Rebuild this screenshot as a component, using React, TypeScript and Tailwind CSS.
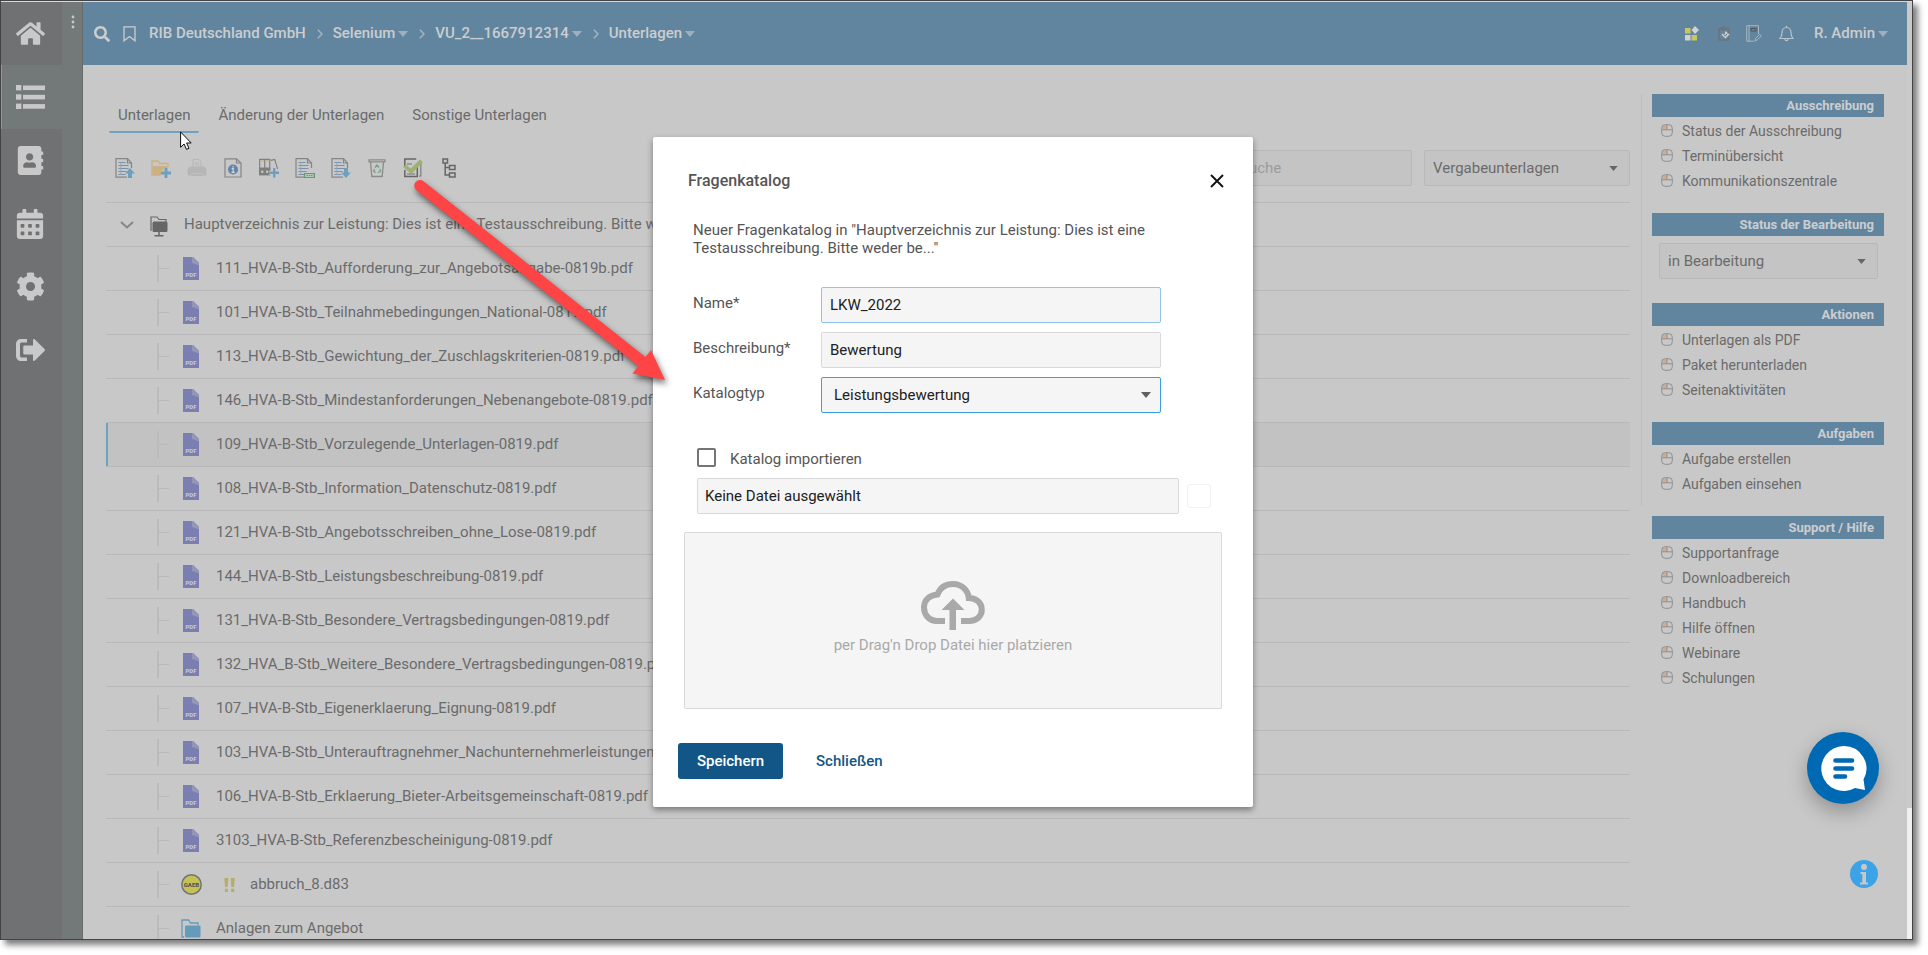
import React from "react";
import { FaHome, FaAddressBook, FaCalendarAlt, FaCog, FaSearch } from "react-icons/fa";

const files = [
  "111_HVA-B-Stb_Aufforderung_zur_Angebotsabgabe-0819b.pdf",
  "101_HVA-B-Stb_Teilnahmebedingungen_National-0819.pdf",
  "113_HVA-B-Stb_Gewichtung_der_Zuschlagskriterien-0819.pdf",
  "146_HVA-B-Stb_Mindestanforderungen_Nebenangebote-0819.pdf",
  "109_HVA-B-Stb_Vorzulegende_Unterlagen-0819.pdf",
  "108_HVA-B-Stb_Information_Datenschutz-0819.pdf",
  "121_HVA-B-Stb_Angebotsschreiben_ohne_Lose-0819.pdf",
  "144_HVA-B-Stb_Leistungsbeschreibung-0819.pdf",
  "131_HVA-B-Stb_Besondere_Vertragsbedingungen-0819.pdf",
  "132_HVA_B-Stb_Weitere_Besondere_Vertragsbedingungen-0819.pdf",
  "107_HVA-B-Stb_Eigenerklaerung_Eignung-0819.pdf",
  "103_HVA-B-Stb_Unterauftragnehmer_Nachunternehmerleistungen-0819.pdf",
  "106_HVA-B-Stb_Erklaerung_Bieter-Arbeitsgemeinschaft-0819.pdf",
  "3103_HVA-B-Stb_Referenzbescheinigung-0819.pdf",
];
const selectedFile = 4;

function Caret({ className }: { className: string }) {
  return (
    <svg aria-hidden="true" viewBox="0 0 10 6" className={className}>
      <path d="M0 0h10L5 6z" fill="currentColor" />
    </svg>
  );
}

function ListIcon() {
  return (
    <svg aria-hidden="true" viewBox="0 0 29 24" className="h-6 w-[29px]" fill="currentColor">
      {[0, 9.3, 18.6].map((y) => (
        <g key={y}>
          <rect x="0" y={y} width="5.4" height="5.4" />
          <rect x="7" y={y + 0.5} width="22" height="4.6" />
        </g>
      ))}
    </svg>
  );
}

function LogoutIcon() {
  return (
    <svg aria-hidden="true" viewBox="0 0 29 22" className="h-[22px] w-[29px]" fill="currentColor">
      <path d="M11 0H5.5C2 0 0 2 0 5.5v11C0 20 2 22 5.500 22H11v-3.600H6c-1.400 0-2-.6-2-2V5.600c0-1.400.6-2 2-2h5z" />
      <path d="M8.500 6.500H17V1.200C17 0 18.100-.3 18.900.5l9.600 9.500c.6.600.6 1.400 0 2l-9.600 9.500c-.8.800-1.900.4-1.900-.8V15.500H8.500c-.8 0-1.200-.4-1.200-1.200V7.700c0-.8.4-1.200 1.200-1.200z" />
    </svg>
  );
}

function Sidebar() {
  const item = "flex h-[63px] w-[61px] shrink-0 items-center justify-center pr-[3px]";
  return (
    <aside className="flex w-[82px] shrink-0 border-r border-[#666b6c] bg-[#737878] text-[#c9c9c9]">
      <nav aria-label="Hauptnavigation" className="flex w-[61px] flex-col bg-[#707173]">
        <a href="#start" aria-label="Startseite" className={item}><FaHome size={29} /></a>
        <a href="#listen" aria-label="Listen" className="flex h-16 w-[61px] shrink-0 items-center justify-center border-l border-[#6ca3c4] bg-[#737878] pr-[3px]"><ListIcon /></a>
        <a href="#kontakte" aria-label="Kontakte" className={item}><FaAddressBook size={29} /></a>
        <a href="#kalender" aria-label="Kalender" className={item}><FaCalendarAlt size={30} /></a>
        <a href="#einstellungen" aria-label="Einstellungen" className={item}><FaCog size={29} /></a>
        <a href="#abmelden" aria-label="Abmelden" className={item}><LogoutIcon /></a>
      </nav>
      <button type="button" aria-label="Menü" className="flex h-10 w-5 items-center justify-center pl-0.5">
        <svg aria-hidden="true" viewBox="0 0 4 14" className="h-3.5 w-1" fill="currentColor">
          <circle cx="2" cy="2" r="1.400" /><circle cx="2" cy="7" r="1.400" /><circle cx="2" cy="12" r="1.400" />
        </svg>
      </button>
    </aside>
  );
}

function Crumb({ label, caret = true, first = false }: { label: string; caret?: boolean; first?: boolean }) {
  return (
    <li className="flex items-center">
      {!first && (
        <svg aria-hidden="true" viewBox="0 0 6 10" className="mr-2.5 h-2.5 w-1.5 text-[#a3b3bf]" fill="none" stroke="currentColor" strokeWidth="1.500">
          <path d="M.8.800 5 5 .8 9.200" />
        </svg>
      )}
      <a href="#pfad" className="flex items-center">
        {label}
        {caret && <Caret className="ml-[3px] h-1.5 w-2.5 text-[#9cb0bf]" />}
      </a>
    </li>
  );
}

function Header() {
  return (
    <header className="flex h-[63px] shrink-0 items-center bg-[#62859f] pl-[11px] pr-[19px] text-[15px] font-medium text-[#cbcdcf]">
      <button type="button" aria-label="Suchen"><FaSearch size={16} /></button>
      <button type="button" aria-label="Lesezeichen" className="ml-[13px]">
        <svg aria-hidden="true" viewBox="0 0 13 16" className="h-4 w-[13px]" fill="none" stroke="currentColor" strokeWidth="1.300">
          <path d="M1 .8h11v14L6.500 10.500 1 14.800z" />
        </svg>
      </button>
      <ol className="ml-[13px] flex items-center gap-[11px]">
        <Crumb label="RIB Deutschland GmbH" caret={false} first />
        <Crumb label="Selenium" />
        <Crumb label="VU_2__1667912314" />
        <Crumb label="Unterlagen" />
      </ol>
      <div className="ml-auto flex items-center">
        <button type="button" aria-label="Apps">
          <svg aria-hidden="true" viewBox="0 0 14 15" className="h-[15px] w-3.5">
            <rect x="0" y="2" width="5.500" height="5.500" fill="#c6c85c" />
            <path d="M10 0 14 4l-4 4-3.500-4z" fill="#d0d2d4" />
            <rect x="0" y="9" width="5.500" height="5.500" fill="#d0d2d4" />
            <rect x="6.500" y="9" width="5.500" height="5.500" fill="#c6c85c" />
          </svg>
        </button>
        <button type="button" aria-label="Aufgaben" className="ml-[19px]">
          <svg aria-hidden="true" viewBox="0 0 12 15" className="h-[15px] w-3">
            <path d="M1 2.500h3C4 .5 7.500.5 7.500 2.500h3V14H1z" fill="#62859f" stroke="#6b747c" strokeWidth="1.600" />
            <path d="M3 3.500h5.500" stroke="#6b747c" strokeWidth="2" />
            <path d="m7.500 5 4 3.500-4 4-1.500-1.500-2.500-2 1-1.500 2 1z" fill="#ccd0d3" />
            <path d="m5.500 8.500 2 1.500 1.800-2.500" stroke="#6b747c" strokeWidth="1" fill="none" />
          </svg>
        </button>
        <button type="button" aria-label="Notizen" className="ml-4">
          <svg aria-hidden="true" viewBox="0 0 16 17" className="h-[17px] w-4" fill="none" stroke="#a6b6c2">
            <path d="M12.500 9V.7H.7v15.500H8M3 .7v15.500" />
            <rect x="5" y="3.500" width="5" height="2.500" stroke="#4e575e" />
            <path d="m9 16 .7-2.700 4-4 1.600 1.600-4 4z" />
          </svg>
        </button>
        <button type="button" aria-label="Benachrichtigungen" className="ml-[17px]">
          <svg aria-hidden="true" viewBox="0 0 15 17" className="h-[17px] w-[15px]" fill="none" stroke="#b9c3ca" strokeWidth="1.200">
            <path d="M1 13.500c2-2 2-3 2-6C3 4.500 5 2.500 7.500 2.500s4.500 2 4.500 5c0 3 0 4 2 6zM7.500 2.500V.8M6 14c0 2.300 3 2.300 3 0" />
          </svg>
        </button>
        <button type="button" className="ml-5 flex items-center">
          R. Admin<Caret className="ml-[3px] h-1.5 w-2.5 text-[#9cb0bf]" />
        </button>
      </div>
    </header>
  );
}

function Sheet({ children }: { children?: React.ReactNode }) {
  return (
    <svg aria-hidden="true" viewBox="0 0 20 20" className="h-5 w-5" fill="none" stroke="#858585" strokeWidth="1.200">
      <path d="M16.500 10V5L12.500.6H1v18.600h11M12.500.6V5h4" />
      <path d="M3.500 4.500h7M3.500 7.500h10M3.500 10.500h10M3.500 13.500h8M3.500 16.500h7" stroke="#7693b0" />
      <path d="M5.800 4v13" stroke="#8fa3b6" strokeWidth=".8" />
      {children}
    </svg>
  );
}

function Toolbar() {
  const tools: [string, React.ReactNode][] = [
    ["Datei hochladen", <Sheet><path d="m15 10 4.800 5.500H17V20h-4v-4.500h-2.800z" fill="#6ba0bf" stroke="none" /></Sheet>],
    ["Neuer Ordner", (
      <svg aria-hidden="true" viewBox="0 0 20 20" className="h-5 w-5" fill="none" stroke="#cbb180" strokeWidth="1.300">
        <path d="M10 17H1V3h6l2 2.500h8V9" />
        <path d="M1.500 17V8h15v9z" fill="#cbb180" stroke="none" />
        <path d="M15 10v10M10 15h10" stroke="#c8c8c8" strokeWidth="5" />
        <path d="M15 10v10M10 15h10" stroke="#6ba0bf" strokeWidth="2.800" />
      </svg>
    )],
    ["Drucken", (
      <svg aria-hidden="true" viewBox="0 0 20 20" className="h-5 w-5" fill="none" stroke="#b6b6b6">
        <path d="M6 9V1.500h6L14 4v5M8 5h4M8 7h4" />
        <path d="M3 9h14l2 2v6h-2.500v-2h-13v2H1v-6z" fill="#b6b6b6" />
        <path d="M4 17h12" strokeWidth="2" />
      </svg>
    )],
    ["Information", (
      <svg aria-hidden="true" viewBox="0 0 20 20" className="h-5 w-5" fill="none" stroke="#858585" strokeWidth="1.200">
        <path d="M2 .8h11.500L18 5v14H2zM13.500.8V5H18" />
        <circle cx="10" cy="11.500" r="5" fill="#6484ab" stroke="none" />
        <path d="M8.700 10.700h1.500v3.500M8.500 14.400h3.200M9.400 8.800h1.400" stroke="#d6dae0" />
      </svg>
    )],
    ["Ordner hinzufügen", (
      <svg aria-hidden="true" viewBox="0 0 21 20" className="h-5 w-[21px]" fill="none" stroke="#7f7f7f" strokeWidth="1.200">
        <path d="M.7 1h5.300v16H.7zM6 1h5.300v16H6zM12.500 2l4-1 3 10" />
        <path d="M2 2.500h3M7.500 2.500h3" stroke="#cbb180" />
        <path d="M.7 10h10.600v7H.7z" fill="#7f7f7f" />
        <circle cx="3.400" cy="14" r="1.300" fill="#c8c8c8" stroke="none" /><circle cx="8.600" cy="14" r="1.300" fill="#c8c8c8" stroke="none" />
        <path d="M16 10v10M11 15h10" stroke="#c8c8c8" strokeWidth="4.500" />
        <path d="M16 10v10M11 15h10" stroke="#6ba0bf" strokeWidth="2.500" />
      </svg>
    )],
    ["Excel-Export", <Sheet><path d="M9.500 15.500h9.900v4H9.500z" fill="#b5c8ba" stroke="#5f9e74" /><path d="M11.500 17.500h6" stroke="#5f9e74" strokeWidth="1.200" strokeDasharray="1.500 .8" /></Sheet>],
    ["Datei herunterladen", <Sheet><path d="m15 20 4.800-5.500H17V10h-4v4.500h-2.800z" fill="#6ba0bf" stroke="none" /></Sheet>],
    ["Papierkorb", (
      <svg aria-hidden="true" viewBox="0 0 20 20" className="h-5 w-5" fill="none" stroke="#8b8b8b" strokeWidth="1.300">
        <path d="M2 1.800h16v2H2zM3.500 4l1.300 14.500h10.400L16.500 4" />
        <path d="m8 9.500 2-2.500 2 2.500M13 11l.6 2.500-2.800 1M9 14.500 6.600 13.500 7.500 11" stroke="#6fa586" />
      </svg>
    )],
    ["Fragenkatalog", (
      <svg aria-hidden="true" viewBox="0 0 20 20" className="h-5 w-5" fill="none" stroke="#666" strokeWidth="1.500">
        <path d="M1.800 9V1h11.500M1.800 12v6.500h12.500V9" />
        <path d="M16 3.500h1.800v14.500H16M4 6h5M4 16h8" stroke="#8d8d8d" />
        <path d="m0 9 3-2.500 4.500 4L17 1.500l2.800 2.700L8.300 16z" fill="#9fb171" stroke="none" />
      </svg>
    )],
    ["Baumstruktur", (
      <svg aria-hidden="true" viewBox="0 0 20 20" className="h-5 w-5" fill="none" stroke="#666" strokeWidth="1.500">
        <path d="M4 1h4.500v4H4zM10.500 7.500h5.500v4h-5.500zM10.500 15h5.500v4h-5.500zM6.200 5v12h4.300M6.200 9.500h4.300" />
      </svg>
    )],
  ];
  return (
    <div className="flex items-center pl-[9px]">
      <div role="toolbar" aria-label="Werkzeuge" className="flex gap-4">
        {tools.map(([label, icon]) => (
          <button key={label} type="button" aria-label={label} className="flex w-5 justify-center">{icon}</button>
        ))}
      </div>
      <input type="search" aria-label="Suche" placeholder="Suche" className="ml-auto h-9 w-[181px] rounded-xs border border-[#b8b8b8] bg-[#c4c4c4] px-2 text-[15px] placeholder:text-[#9c9c9c]" />
      <div className="relative ml-3">
        <select aria-label="Bereich" className="h-9 w-[206px] appearance-none rounded-xs border border-[#b8b8b8] bg-[#c4c4c4] px-2 text-[15px] text-[#6b6b6b]">
          <option>Vergabeunterlagen</option>
        </select>
        <Caret className="pointer-events-none absolute right-3 top-4 h-[5px] w-[9px] text-[#666]" />
      </div>
    </div>
  );
}

function PdfIcon() {
  return (
    <svg aria-hidden="true" viewBox="0 0 16 23" className="h-[23px] w-4">
      <path d="M0 0h10l6 6v17H0z" fill="#7b7eb0" />
      <path d="M9 0h1l6 6v2.500L9 6z" fill="#9296b8" />
      <text x="8" y="19.500" textAnchor="middle" fontSize="6" fontWeight="900" fontFamily="Roboto" fill="#c5c6d4">PDF</text>
    </svg>
  );
}

function Branch() {
  return (
    <span aria-hidden="true" className="flex h-[27px] w-3 items-center border-l-2 border-[#bbb]">
      <span className="h-px w-full bg-[#b9b9b9]" />
    </span>
  );
}

function FileRow({ icon, children, selected = false }: { icon: React.ReactNode; children: React.ReactNode; selected?: boolean }) {
  return (
    <li
      className={
        selected
          ? "relative flex h-11 shrink-0 items-center border-b border-[#b8b8b8] bg-[#c2c2c2] pl-[51px] before:absolute before:inset-y-0 before:left-0 before:w-0.5 before:bg-[#6ca3c4]"
          : "flex h-11 shrink-0 items-center border-b border-[#b8b8b8] pl-[51px]"
      }
    >
      <Branch />
      <span className="ml-2.5 flex w-6 justify-center">{icon}</span>
      {children}
    </li>
  );
}

function FileTree() {
  return (
    <ul className="mt-4 flex flex-col border-t border-[#b8b8b8] whitespace-nowrap">
      <li className="flex h-11 shrink-0 items-center border-b border-[#b8b8b8] pl-3.5">
        <button type="button" aria-label="Einklappen">
          <svg aria-hidden="true" viewBox="0 0 14 8" className="h-2 w-3.5" fill="none" stroke="#858585" strokeWidth="2"><path d="m1 1 6 5.500L13 1" /></svg>
        </button>
        <svg aria-hidden="true" viewBox="0 0 18 22" className="ml-4 mt-1 h-[22px] w-[18px]" fill="none" stroke="#666" strokeWidth="1.200">
          <path d="M1 15V1h6l2 2.500h7V6" />
          <rect x="2.500" y="5.500" width="15" height="10.500" rx="1.500" fill="#666" stroke="none" />
          <path d="M9 16v4M4.500 19.800h9" strokeWidth="1.500" />
        </svg>
        <span className="ml-4">Hauptverzeichnis zur Leistung: Dies ist eine Testausschreibung. Bitte weder be...</span>
      </li>
      {files.map((name, i) => (
        <FileRow key={name} icon={<PdfIcon />} selected={i === selectedFile}>
          <a href="#datei" className="ml-[13px]">{name}</a>
        </FileRow>
      ))}
      <FileRow
        icon={
          <svg aria-hidden="true" viewBox="0 0 21 21" className="h-[21px] w-[21px]">
            <circle cx="10.500" cy="10.500" r="9.700" fill="#c4c255" stroke="#737373" strokeWidth="1.500" />
            <text x="10.500" y="12.700" textAnchor="middle" fontSize="6" fontWeight="900" fontFamily="Roboto" fill="#555">GAEB</text>
          </svg>
        }
      >
        <svg aria-hidden="true" viewBox="0 0 11 14" className="ml-[21px] h-3.5 w-[11px]" fill="#b5ad68">
          <path d="M.3 0h4L3.600 9H1zM6.700 0h4L10 9H7.400zM.8 10.700h3V14h-3zM7.200 10.700h3V14h-3z" />
        </svg>
        <a href="#datei" className="ml-[15px]">abbruch_8.d83</a>
      </FileRow>
      <FileRow
        icon={
          <svg aria-hidden="true" viewBox="0 0 20 19" className="h-[19px] w-5" fill="none" stroke="#649bba" strokeWidth="1.300">
            <path d="M3 18H1V1h6.500l2 3H17v2" />
            <rect x="4" y="6.500" width="15.500" height="12" rx="1" fill="#649bba" stroke="none" />
          </svg>
        }
      >
        <a href="#ordner" className="ml-[13px]">Anlagen zum Angebot</a>
      </FileRow>
    </ul>
  );
}

function PanelTitle({ children }: { children: React.ReactNode }) {
  return <h2 className="flex h-[23px] items-center justify-end bg-[#62859f] pr-2.5 text-[13px] font-bold text-[#cbcdcf]">{children}</h2>;
}

function LinkPanel({ title, links }: { title: string; links: string[] }) {
  return (
    <section className="pb-5">
      <PanelTitle>{title}</PanelTitle>
      <ul className="pt-px text-sm">
        {links.map((l) => (
          <li key={l} className="flex h-[25px] items-center pl-[9px]">
            <svg aria-hidden="true" viewBox="0 0 12 13" className="h-[13px] w-3" fill="none" stroke="#8f8f8f">
              <path d="M1.500 1.500H6v4H1.500z" fill="#cfac90" stroke="none" />
              <rect x=".7" y=".7" width="10.600" height="11.600" rx="3.500" />
              <path d="M.7 5.800h10.600M6 .7v5" />
            </svg>
            <a href="#aktion" className="ml-[9px]">{l}</a>
          </li>
        ))}
      </ul>
    </section>
  );
}

function RightPanel() {
  return (
    <aside className="w-[232px] shrink-0 pt-[29px]">
      <LinkPanel title="Ausschreibung" links={["Status der Ausschreibung", "Terminübersicht", "Kommunikationszentrale"]} />
      <section className="pb-6">
        <PanelTitle>Status der Bearbeitung</PanelTitle>
        <div className="relative ml-[7px] mr-1.5 mt-[7px]">
          <select aria-label="Status der Bearbeitung" className="h-9 w-full appearance-none rounded-xs border border-[#b8b8b8] bg-[#c4c4c4] px-2 text-[15px] text-[#6b6b6b]">
            <option>in Bearbeitung</option>
          </select>
          <Caret className="pointer-events-none absolute right-3 top-4 h-[5px] w-[9px] text-[#666]" />
        </div>
      </section>
      <LinkPanel title="Aktionen" links={["Unterlagen als PDF", "Paket herunterladen", "Seitenaktivitäten"]} />
      <LinkPanel title="Aufgaben" links={["Aufgabe erstellen", "Aufgaben einsehen"]} />
      <LinkPanel title="Support / Hilfe" links={["Supportanfrage", "Downloadbereich", "Handbuch", "Hilfe öffnen", "Webinare", "Schulungen"]} />
    </aside>
  );
}

function CatalogDialog() {
  const field = "h-9 w-[340px] rounded-xs border bg-[#f5f5f5] text-[15px] text-[#212121]";
  return (
    <div className="absolute inset-0 flex items-center justify-center pr-[7px] pt-1">
      <form role="dialog" aria-labelledby="dialog-title" className="w-[600px] rounded-xs bg-white px-[25px] pb-7 pt-[30px] text-[15px] text-[#555] shadow-[0_3px_6px_rgba(0,0,0,0.4)]">
        <div className="flex h-7 items-center justify-between pl-2.5 pr-1">
          <h1 id="dialog-title" className="text-base font-medium">Fragenkatalog</h1>
          <button type="button" aria-label="Dialog schließen">
            <svg aria-hidden="true" viewBox="0 0 14 14" className="h-3.5 w-3.5" fill="none" stroke="#111" strokeWidth="1.900"><path d="m1 1 12 12M13 1 1 13" /></svg>
          </button>
        </div>
        <p className="mt-[26px] w-[480px] pl-[15px] leading-[18px]">
          Neuer Fragenkatalog in "Hauptverzeichnis zur Leistung: Dies ist eine Testausschreibung. Bitte weder be..."
        </p>
        <div className="mt-[30px] grid grid-cols-[128px_340px] gap-y-[9px] pl-[15px]">
          <label htmlFor="name" className="pt-[5px]">Name*</label>
          <input id="name" type="text" defaultValue="LKW_2022" className={`${field} border-[#8fc6e6] px-2`} />
          <label htmlFor="description" className="pt-[5px]">Beschreibung*</label>
          <input id="description" type="text" defaultValue="Bewertung" className={`${field} border-[#d9d9d9] px-2`} />
          <label htmlFor="type" className="pt-[5px]">Katalogtyp</label>
          <div className="relative">
            <select id="type" className={`${field} appearance-none border-[#3b9fdd] px-3`}>
              <option>Leistungsbewertung</option>
            </select>
            <Caret className="pointer-events-none absolute right-2.5 top-[15px] h-1.5 w-2.5 text-[#606060]" />
          </div>
        </div>
        <div className="mt-[31px] flex items-center pl-[19px]">
          <input id="import" type="checkbox" className="h-[19px] w-[19px] appearance-none rounded-xs border-2 border-[#757575] bg-white" />
          <label htmlFor="import" className="ml-3.5 mt-1">Katalog importieren</label>
        </div>
        <div className="mt-2 flex items-center pl-[19px]">
          <input type="text" readOnly aria-label="Datei" value="Keine Datei ausgewählt" className="h-9 w-[482px] rounded-xs border border-[#d9d9d9] bg-[#f5f5f5] px-[7px] text-[#212121]" />
          <button type="button" aria-label="Datei wählen" className="ml-2 h-6 w-6 rounded-[3px] border border-[#f2f2f2]" />
        </div>
        <div className="mx-1.5 mt-[18px] flex h-[177px] flex-col items-center rounded-xs border border-[#d9d9d9] bg-[#f5f5f5] pt-12 text-[#a9a9a9]">
          <svg aria-hidden="true" viewBox="0 0 64 49" className="h-[49px] w-16" fill="none" stroke="currentColor">
            <path d="M24 40H16C8.500 40 3 34 3 26.500S8.500 14 16.500 13.500C19 7 24.500 3 32 3c8.500 0 15 6 15.800 14 7.500.2 13 4.800 13 11.500S55.500 40 48.500 40H40" strokeWidth="6" />
            <path d="M32 17.500 43.500 29H35v20h-6.500V29H20.500z" fill="currentColor" stroke="none" />
          </svg>
          <span className="mt-1 leading-[22px]">per Drag'n Drop Datei hier platzieren</span>
        </div>
        <div className="mt-[34px] flex gap-4 font-medium">
          <button type="submit" className="h-9 w-[105px] rounded-[3px] bg-[#125688] text-white">Speichern</button>
          <button type="button" className="h-9 px-[17px] text-[#125688]">Schließen</button>
        </div>
      </form>
    </div>
  );
}

function Pointers() {
  return (
    <>
      <svg aria-hidden="true" viewBox="0 0 280 230" className="pointer-events-none absolute left-[399px] top-[169px] h-[230px] w-[280px] overflow-visible drop-shadow-[2px_4px_3px_rgba(0,0,0,0.55)]">
        <path d="M16.500 20.300a5.300 5.300 0 0 1 7-9.100L245.500 187l5.500-7 14 30-32.500-6.500 6-7.500z" fill="#fe4444" />
      </svg>
      <svg aria-hidden="true" viewBox="0 0 12 19" className="pointer-events-none absolute left-[179px] top-[130px] h-[19px] w-3">
        <path d="M.6.900v15.400l3.500-3.300 2.400 5.400 2.500-1.100-2.400-5.300h4.600z" fill="#fff" stroke="#111" />
      </svg>
    </>
  );
}

export default function App() {
  return (
    <div className="h-screen bg-white pb-[15px] pr-[15px] font-['Roboto',sans-serif] text-[15px] text-[#6b6b6b]">
      <div className="relative flex h-full border border-[#444] bg-[#c8c8c8] shadow-[5px_5px_6px_rgba(0,0,0,0.5)]">
        <div className="flex min-w-0 flex-1 overflow-hidden border-t border-[#d8d8d8]">
          <Sidebar />
          <div className="flex min-w-0 flex-1 flex-col">
            <Header />
            <div className="flex min-h-0 flex-1 pl-[23px] pr-[23px]">
              <main className="flex min-w-0 flex-1 flex-col pt-[34px]">
                <nav aria-label="Unterlagen" className="mb-[17px] flex gap-2.5 pl-[3px]">
                  <a href="#unterlagen" className="h-[34px] rounded-xs border-b-2 border-[#6ca3c4] px-[9px] leading-8">Unterlagen</a>
                  <a href="#aenderung" className="h-[34px] px-[9px] leading-8">Änderung der Unterlagen</a>
                  <a href="#sonstige" className="h-[34px] px-[9px] leading-8">Sonstige Unterlagen</a>
                </nav>
                <Toolbar />
                <FileTree />
              </main>
              <div aria-hidden="true" className="ml-[11px] mr-2.5 mt-[29px] h-[412px] w-px bg-[#bdbdbd]" />
              <RightPanel />
            </div>
          </div>
          <div aria-hidden="true" className="flex w-[5px] shrink-0 flex-col justify-end bg-[#cacaca]">
            <div className="h-[131px] bg-[#f0f0f0]" />
          </div>
        </div>
        <CatalogDialog />
        <button type="button" aria-label="Chat öffnen" className="absolute bottom-[135px] right-[33px] h-[72px] w-[72px] rounded-full bg-[#0069b4] shadow-[0_8px_20px_rgba(0,0,0,0.28)]">
          <svg aria-hidden="true" viewBox="0 0 72 72" className="h-[72px] w-[72px]">
            <path d="M36.500 14a22.500 22.500 0 1 0 11.500 42l10 2-1.500-10.500A22.500 22.500 0 0 0 36.500 14z" fill="#fff" />
            <path d="M28.500 28.500h16.500M28.500 36.500h16.500M28.500 44.500h9.500" stroke="#0069b4" strokeWidth="4.600" strokeLinecap="round" />
          </svg>
        </button>
        <button type="button" aria-label="Information" className="absolute bottom-[51px] right-[34px] h-7 w-7">
          <svg aria-hidden="true" viewBox="0 0 28 28" className="h-7 w-7">
            <circle cx="14" cy="14" r="14" fill="#3ba3e6" />
            <circle cx="14" cy="7" r="3" fill="#c8c8c8" />
            <path d="M10.500 12h5.500v10.500h2V24.500h-8V22.500h2.300V14h-1.800z" fill="#c8c8c8" />
          </svg>
        </button>
        <Pointers />
      </div>
    </div>
  );
}
